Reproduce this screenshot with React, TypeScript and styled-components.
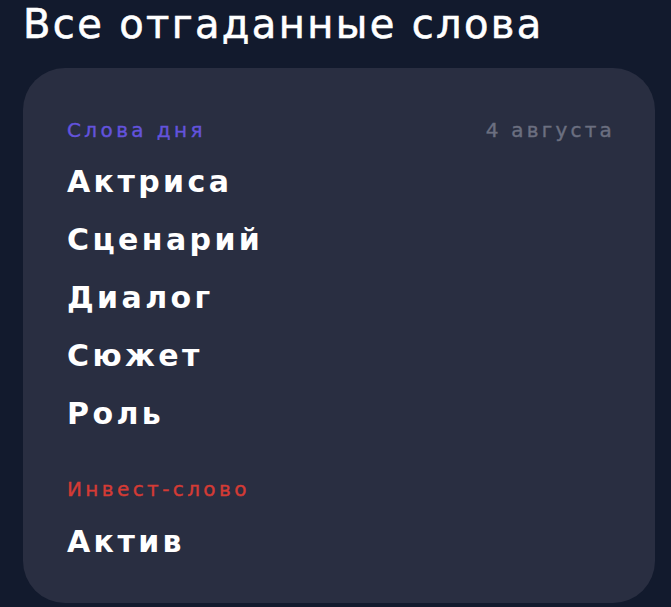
import * as React from 'react';
import styled, { createGlobalStyle } from 'styled-components';

const DAY_WORDS = ['Актриса', 'Сценарий', 'Диалог', 'Сюжет', 'Роль'];
const INVEST_WORDS = ['Актив'];

const App: React.FC = () => {
  return (
    <>
      <GlobalStyle />
      <Page>
        <Title>Все отгаданные слова</Title>
        <Card>
          <LabelRow>
            <Label tone="day">Слова дня</Label>
            <DateText>4 августа</DateText>
          </LabelRow>
          <List>
            {DAY_WORDS.map((word) => (
              <Word key={word}>{word}</Word>
            ))}
          </List>
          <LabelRow spaced>
            <Label tone="invest">Инвест-слово</Label>
          </LabelRow>
          <List>
            {INVEST_WORDS.map((word) => (
              <Word key={word}>{word}</Word>
            ))}
          </List>
        </Card>
      </Page>
    </>
  );
};

const GlobalStyle = createGlobalStyle`
  html, body {
    margin: 0;
    padding: 0;
    background-color: #121a2d;
  }
  body {
    font-family: 'DejaVu Sans', 'Noto Sans', sans-serif;
  }
`;

const Page = styled.div`
  display: flex;
  flex-direction: column;
  gap: 21px;
  min-height: 607px;
  padding: 1px 16px 0 23px;
  box-sizing: border-box;
  background-color: #121a2d;
`;

const Title = styled.h1`
  margin: 0;
  font-size: 40px;
  line-height: 46px;
  font-weight: 400;
  letter-spacing: 2.35px;
  color: #ffffff;
  -webkit-text-stroke: 0.6px #ffffff;
`;

const Card = styled.div`
  display: flex;
  flex-direction: column;
  padding: 50px 43px 32px 44px;
  border-radius: 42px;
  background-color: #292e41;
`;

const LabelRow = styled.div<{ spaced?: boolean }>`
  display: flex;
  align-items: center;
  justify-content: space-between;
  margin-top: ${(props) => (props.spaced ? '34px' : '0')};
  margin-bottom: ${(props) => (props.spaced ? '12px' : '11px')};
`;

const Label = styled.span<{ tone: 'day' | 'invest' }>`
  font-size: 20px;
  line-height: 24px;
  letter-spacing: 3.4px;
  color: ${(props) => (props.tone === 'day' ? '#6353dc' : '#d43b35')};
  -webkit-text-stroke: 0.4px ${(props) => (props.tone === 'day' ? '#6353dc' : '#d43b35')};
`;

const DateText = styled.span`
  font-size: 20px;
  line-height: 24px;
  letter-spacing: 3.2px;
  margin-right: -3px;
  color: #6b6f80;
  -webkit-text-stroke: 0.4px #6b6f80;
`;

const List = styled.ul`
  margin: 0;
  padding: 0;
  list-style: none;
`;

const Word = styled.li`
  font-size: 30px;
  line-height: 58px;
  font-weight: 700;
  letter-spacing: 3.4px;
  color: #ffffff;
`;

export default App;
